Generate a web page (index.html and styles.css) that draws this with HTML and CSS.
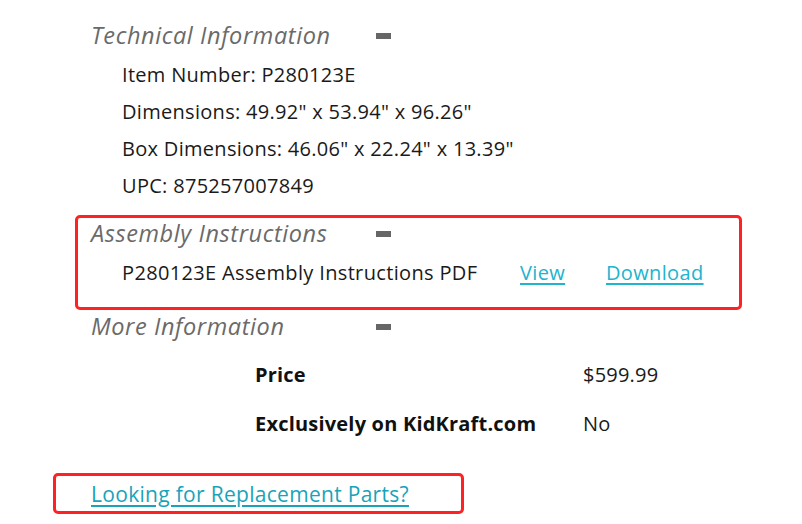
FILE: index.html
```html
<!DOCTYPE html>
<html>
<head>
<meta charset="utf-8">
<link rel="stylesheet" href="styles.css">
</head>
<body>
<div class="page">
  <div class="sec-head first">
    <span class="sec-title">Technical Information</span>
    <span class="dash"></span>
  </div>
  <div class="items">
    <div class="item">Item Number: P280123E</div>
    <div class="item">Dimensions: 49.92" x 53.94" x 96.26"</div>
    <div class="item">Box Dimensions: 46.06" x 22.24" x 13.39"</div>
    <div class="item">UPC: 875257007849</div>
  </div>

  <div class="box assembly">
    <div class="sec-head inbox">
      <span class="sec-title">Assembly Instructions</span>
      <span class="dash"></span>
    </div>
    <div class="pdf-row">
      <span class="pdf-name">P280123E Assembly Instructions PDF</span>
      <a class="link view" href="#">View</a>
      <a class="link" href="#">Download</a>
    </div>
  </div>

  <div class="sec-head more">
    <span class="sec-title">More Information</span>
    <span class="dash"></span>
  </div>
  <div class="info-table">
    <div class="info-row">
      <span class="label">Price</span>
      <span class="value">$599.99</span>
    </div>
    <div class="info-row second">
      <span class="label">Exclusively on KidKraft.com</span>
      <span class="value">No</span>
    </div>
  </div>

  <div class="box parts">
    <a class="parts-link" href="#">Looking for Replacement Parts?</a>
  </div>
</div>
</body>
</html>
```

FILE: styles.css
```css
html, body {
  margin: 0;
  padding: 0;
  background: #ffffff;
}
body {
  font-family: "Open Sans", "Lato", sans-serif;
  color: #1a1a1a;
  width: 802px;
  height: 524px;
  overflow: hidden;
}
.page {
  padding-top: 17px;
  padding-left: 91px;
}
.sec-head {
  display: flex;
  align-items: center;
  height: 36px;
}
.sec-head.first {
  height: 36px;
}
.sec-title {
  width: 285px;
  font-size: 23.5px;
  letter-spacing: 0.6px;
  font-style: italic;
  color: #6a6a6a;
  white-space: nowrap;
}
.dash {
  display: block;
  width: 15px;
  height: 6px;
  background: #666666;
  margin-top: 2px;
}
.items {
  padding-left: 31px;
  padding-top: 3px;
}
.item {
  height: 37px;
  line-height: 37px;
  font-size: 20px;
  letter-spacing: 0.3px;
  white-space: nowrap;
}
.box {
  border: 3px solid #ff2222;
  border-radius: 5px;
  box-sizing: border-box;
}
.assembly {
  margin-top: 11px;
  margin-left: -16px;
  width: 667px;
  padding-left: 13px;
  padding-bottom: 15px;
}
.inbox {
  height: 30px;
}
.pdf-row {
  margin-top: 4px;
  height: 40px;
  display: flex;
  align-items: center;
  padding-left: 31px;
  font-size: 20px;
  letter-spacing: 0.35px;
  white-space: nowrap;
}
.pdf-name {
  width: 398px;
}
.link {
  color: #20b4ce;
  text-decoration: underline;
  text-underline-offset: 3px;
}
.view {
  display: inline-block;
  width: 86px;
}
.more {
  margin-top: -2px;
}
.info-table {
  margin-top: 5px;
  padding-left: 164px;
}
.info-row {
  display: flex;
  align-items: center;
  height: 50px;
  font-size: 20px;
  letter-spacing: 0.2px;
}
.info-row.second {
  height: 49px;
}
.label {
  width: 328px;
  font-weight: 700;
  color: #111111;
}
.value {
  color: #1a1a1a;
}
.parts {
  margin-top: 25px;
  margin-left: -38px;
  width: 411px;
  height: 41px;
  display: flex;
  align-items: center;
  padding-left: 35px;
}
.parts-link {
  font-size: 21px;
  letter-spacing: 0.3px;
  color: #19a3b9;
  text-decoration: underline;
  text-underline-offset: 3px;
  white-space: nowrap;
}
```
